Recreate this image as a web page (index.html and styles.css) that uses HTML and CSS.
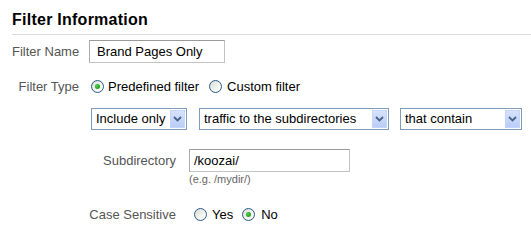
FILE: index.html
```html
<!DOCTYPE html>
<html>
<head>
<meta charset="utf-8">
<title>Filter Information</title>
<link rel="stylesheet" href="styles.css">
</head>
<body>
<div class="panel">
  <h2 class="title">Filter Information</h2>

  <div class="row row-name">
    <span class="label">Filter Name</span>
    <div class="input name-input">Brand Pages Only</div>
  </div>

  <div class="row row-type">
    <span class="label">Filter Type</span>
    <span class="radio checked first"></span><span class="opt">Predefined filter</span>
    <span class="radio second"></span><span class="opt">Custom filter</span>
  </div>

  <div class="selects">
    <div class="select s1"><span class="sel-text">Include only</span><span class="arrow"><svg width="9" height="6" viewBox="0 0 9 6"><path d="M1 1 L4.5 4.5 L8 1" fill="none" stroke="#4d6185" stroke-width="1.8"/></svg></span></div>
    <div class="select s2"><span class="sel-text">traffic to the subdirectories</span><span class="arrow"><svg width="9" height="6" viewBox="0 0 9 6"><path d="M1 1 L4.5 4.5 L8 1" fill="none" stroke="#4d6185" stroke-width="1.8"/></svg></span></div>
    <div class="select s3"><span class="sel-text">that contain</span><span class="arrow"><svg width="9" height="6" viewBox="0 0 9 6"><path d="M1 1 L4.5 4.5 L8 1" fill="none" stroke="#4d6185" stroke-width="1.8"/></svg></span></div>
  </div>

  <div class="row row-sub">
    <span class="label wide">Subdirectory</span>
    <div class="field">
      <div class="input sub-input">/koozai/</div>
      <div class="hint">(e.g. /mydir/)</div>
    </div>
  </div>

  <div class="row row-case">
    <span class="label wide">Case Sensitive</span>
    <span class="radio yes"></span><span class="opt">Yes</span>
    <span class="radio checked no"></span><span class="opt">No</span>
  </div>
</div>
</body>
</html>
```

FILE: styles.css
```css
html, body {
  margin: 0;
  padding: 0;
  background: #ffffff;
}

.panel {
  padding-left: 12px;
  font-family: "Liberation Sans", Arial, sans-serif;
  font-size: 13px;
  color: #000;
}

.title {
  margin: 0;
  padding: 10px 0 4px 0;
  font-size: 16px;
  line-height: 20px;
  font-weight: bold;
  letter-spacing: 0.25px;
  color: #000;
  border-bottom: 1px solid #dcdcdc;
}

.row {
  display: flex;
  align-items: center;
}

.label {
  display: inline-block;
  width: 67px;
  text-align: right;
  color: #555;
  white-space: nowrap;
  flex: none;
}

.label.wide {
  width: 164px;
}

.input {
  box-sizing: border-box;
  height: 23px;
  line-height: 21px;
  border: 1px solid #c2c2c2;
  border-top-color: #9a9a9a;
  border-left-color: #ababab;
  background: #fff;
  white-space: nowrap;
}

.row-name {
  margin-top: 5px;
}

.name-input {
  margin-left: 10px;
  width: 136px;
  padding-left: 7px;
}

.row-type {
  margin-top: 13px;
  height: 20px;
}

.radio {
  box-sizing: border-box;
  position: relative;
  display: inline-block;
  width: 13px;
  height: 13px;
  border-radius: 50%;
  border: 1px solid #2a5a8a;
  background: linear-gradient(135deg, #dcdcd5 0%, #f4f4f0 60%, #ffffff 100%);
  flex: none;
}

.radio.checked::after {
  content: "";
  position: absolute;
  left: 3px;
  top: 3px;
  width: 5px;
  height: 5px;
  border-radius: 50%;
  background: radial-gradient(circle at 40% 40%, #55d24f 0%, #21a121 60%, #5fbf5a 100%);
}

.opt {
  margin-left: 4px;
  white-space: nowrap;
}

.radio.first {
  margin-left: 12px;
}

.radio.second {
  margin-left: 10px;
}

.row-type .radio.second + .opt {
  margin-left: 5px;
}

.selects {
  display: flex;
  margin-top: 12px;
  margin-left: 79px;
}

.select {
  box-sizing: border-box;
  height: 22px;
  border: 1px solid #7f9db9;
  background: #fff;
  display: flex;
  align-items: center;
  justify-content: space-between;
  padding: 1px 1px 1px 4px;
  white-space: nowrap;
  flex: none;
}

.sel-text {
  line-height: 18px;
}

.s1 { width: 96px; }
.s2 { width: 190px; margin-left: 12px; }
.s3 { width: 122px; margin-left: 11px; }

.arrow {
  box-sizing: border-box;
  width: 15px;
  height: 18px;
  border: 1px solid #c4d5fb;
  background: linear-gradient(180deg, #d6e2fd 0%, #bacdf8 100%);
  display: flex;
  align-items: center;
  justify-content: center;
  flex: none;
}

.arrow svg {
  display: block;
}

.row-sub {
  margin-top: 19px;
  align-items: flex-start;
}

.row-sub .label {
  line-height: 23px;
}

.field {
  margin-left: 13px;
}

.sub-input {
  width: 161px;
  padding-left: 4px;
}

.hint {
  font-size: 11px;
  line-height: 14px;
  color: #666;
}

.row-case {
  margin-top: 18px;
  height: 20px;
}

.radio.yes {
  margin-left: 18px;
}

.radio.yes + .opt {
  margin-left: 5px;
}

.radio.no {
  margin-left: 9px;
}

.radio.no + .opt {
  margin-left: 6px;
}
```
